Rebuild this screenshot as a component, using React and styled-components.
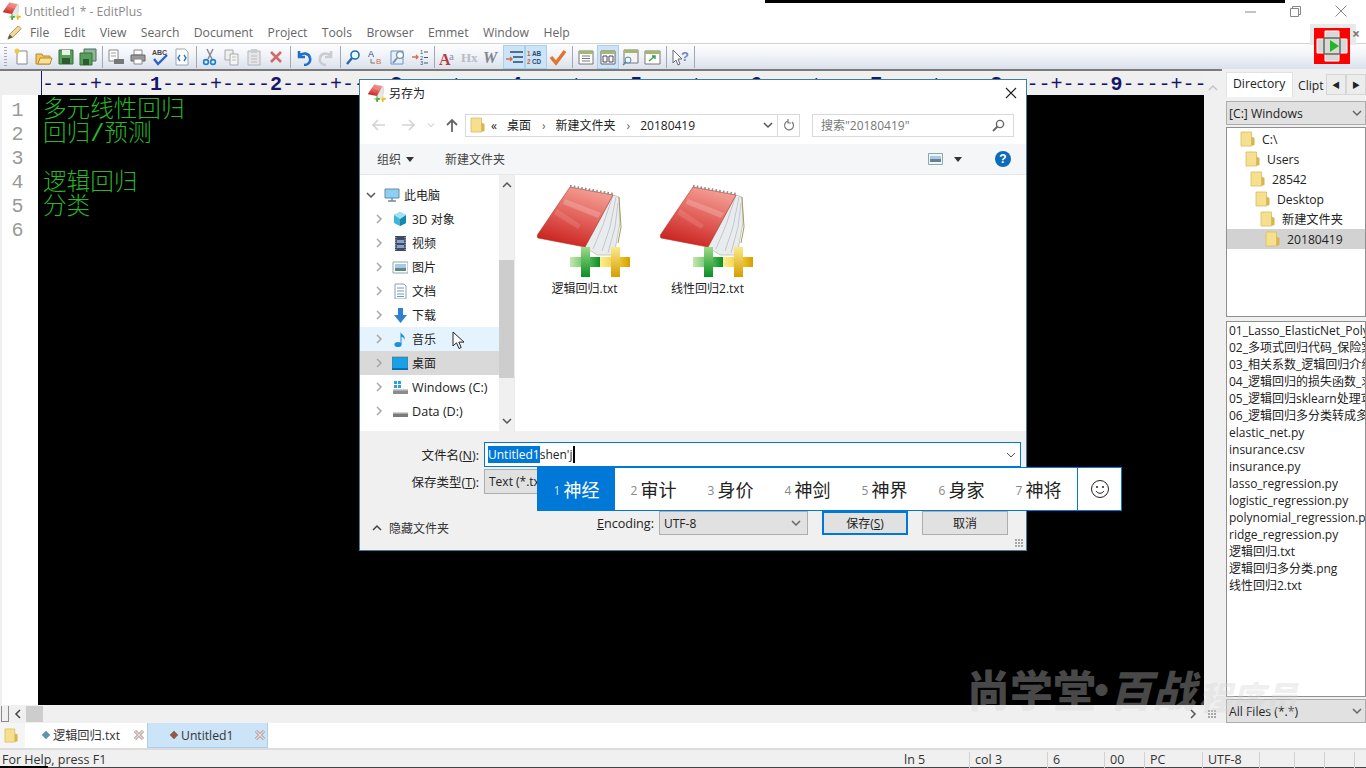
import { Fragment, useId } from "react";
import styled, { createGlobalStyle } from "styled-components";

const UI = `"Open Sans", "Noto Sans CJK SC", sans-serif`;

const Global = createGlobalStyle`
  html, body { margin: 0; padding: 0; background: #f0f0f0; }
  * { box-sizing: border-box; }
`;

const Shell = styled.div`
  position: relative;
  width: 1366px;
  height: 768px;
  overflow: hidden;
  display: flex;
  flex-direction: column;
  background: #f0f0f0;
  font-family: ${UI};
  font-size: 12.2px;
  color: #222;
`;

const Svg = styled.svg`
  flex: none;
`;

/* ---- app chrome ---- */
const TitleBar = styled.div`
  height: 22px;
  flex: none;
  display: flex;
  align-items: center;
  gap: 3px;
  padding-left: 3px;
  background: #fff;
  color: #8a8a8a;
`;
const WinButtons = styled.div`
  margin-left: auto;
  display: flex;
  height: 22px;
  align-items: center;
  padding-right: 3px;
`;
const WinButton = styled.div`
  width: 45px;
  display: flex;
  justify-content: center;
`;
const TopStrip = styled.div`
  position: absolute;
  left: 765px;
  top: 0;
  width: 520px;
  height: 3px;
  background: #000;
`;
const MenuBar = styled.div`
  height: 21px;
  flex: none;
  display: flex;
  align-items: center;
  padding-left: 6px;
  background: #fff;
  color: #666;
`;
const MenuItem = styled.span`
  margin-left: ${(p) => p.$gap}px;
`;
const ToolBar = styled.div`
  height: 26px;
  flex: none;
  display: flex;
  align-items: center;
  padding-left: 4px;
  border-top: 1px solid #d4d4d4;
  background: linear-gradient(#fdfdfe, #f0f3f8 45%, #dbe1ec);
`;
const Gripper = styled.div`
  width: 3px;
  height: 20px;
  margin-right: 4px;
  background: repeating-linear-gradient(#a9a9a9 0 1px, transparent 1px 3px);
`;
const ToolBtn = styled.div`
  width: 22px;
  height: 24px;
  flex: none;
  display: flex;
  align-items: center;
  justify-content: center;
  border: 1px solid ${(p) => (p.$active ? "#a9cfec" : "transparent")};
  background: ${(p) => (p.$active ? "#cde4f7" : "transparent")};
`;
const ToolSep = styled.div`
  width: 1px;
  height: 22px;
  flex: none;
  margin: 0 2.5px;
  background: #a4a8b0;
`;
const RunBadge = styled.div`
  position: absolute;
  left: 1310px;
  top: 24px;
  width: 46px;
  height: 21px;
  background: #e9e9e9;
`;
const RunIcon = styled.svg`
  position: absolute;
  left: 1314px;
  top: 28px;
`;
const RunClose = styled.span`
  position: absolute;
  left: 1352px;
  top: 24px;
  color: #777;
  font-size: 14px;
  font-weight: 700;
`;

/* ---- workspace ---- */
const Workspace = styled.div`
  flex: 1;
  min-height: 0;
  display: flex;
`;
const EditorPane = styled.div`
  width: 1222px;
  flex: none;
  display: flex;
  flex-direction: column;
  border-top: 2px solid #7b7b7b;
`;
const EditorRow = styled.div`
  flex: 1;
  min-height: 0;
  display: flex;
`;
const EditorCol = styled.div`
  width: 1204px;
  flex: none;
  display: flex;
  flex-direction: column;
`;
const RulerBar = styled.div`
  height: 24px;
  flex: none;
  padding-left: 42px;
  background: #efefef;
  overflow: hidden;
`;
const RulerText = styled.div`
  height: 24px;
  border-left: 1px solid #1a1a6e;
  margin-left: -1px;
  padding-top: 2px;
  font: 20px/24px "Liberation Mono", monospace;
  color: #16166a;
  white-space: pre;
`;
const RulerNum = styled.b`
  font-weight: 700;
`;
const TextArea = styled.div`
  flex: 1;
  display: flex;
  min-height: 0;
`;
const LineGutter = styled.div`
  width: 38px;
  flex: none;
  padding: 4px 5px 0 0;
  background: #fff;
  border-left: 2px solid #efefef;
  font: 20px/24px "Liberation Mono", monospace;
  color: #9a9a9a;
  text-align: center;
`;
const Code = styled.div`
  flex: 1;
  padding: 4px 0 0 5px;
  background: #000;
  color: #28b828;
  font: 300 23.6px/24.2px "Liberation Mono", "Noto Sans CJK SC", monospace;
  white-space: pre;
`;
const CodeLine = styled.div`
  height: 24.2px;
`;
const VScroll = styled.div`
  width: 18px;
  flex: none;
  display: flex;
  justify-content: center;
  padding-top: 12px;
  background: #f0f0f0;
`;
const HScroll = styled.div`
  height: 18px;
  flex: none;
  display: flex;
  align-items: center;
  background: #f0f0f0;
`;
const HStub = styled.div`
  width: 8px;
  height: 16px;
  margin-left: 1px;
  border: 1px solid #8c8c8c;
  border-top: none;
`;
const HArrow = styled.div`
  width: 17px;
  flex: none;
  display: flex;
  justify-content: center;
`;
const HThumb = styled.div`
  width: 17px;
  height: 16px;
  background: #cdcdcd;
`;
const HEnd = styled.div`
  margin-left: auto;
  display: flex;
  align-items: center;
  padding-right: 5px;
  gap: 10px;
`;
const Grip = styled.div`
  width: 9px;
  height: 9px;
  background: radial-gradient(circle at 1px 1px, #a8a8a8 1px, transparent 1.2px) 0 0 / 3px 3px;
`;

/* ---- side panel ---- */
const Side = styled.div`
  width: 140px;
  margin-left: 4px;
  flex: none;
  display: flex;
  flex-direction: column;
  padding-top: 3px;
`;
const SideTabs = styled.div`
  height: 25px;
  flex: none;
  display: flex;
  align-items: flex-start;
`;
const SideTab = styled.div`
  width: ${(p) => p.$w}px;
  height: 25px;
  flex: none;
  padding: ${(p) => (p.$on ? "2px 0 0 6px" : "4px 0 0 4px")};
  background: ${(p) => (p.$on ? "#fff" : "#f0f0f0")};
  border: 1px solid ${(p) => (p.$on ? "#e2e2e2" : "transparent")};
  border-bottom: none;
  overflow: hidden;
  white-space: nowrap;
`;
const ArrowBtn = styled.div`
  width: 20px;
  height: 21px;
  margin-top: 2px;
  flex: none;
  display: flex;
  align-items: center;
  justify-content: center;
  background: #ececec;
  border: 1px solid #d6d6d6;
  font-size: 8px;
  color: #222;
`;
const SideSelect = styled.div`
  height: 24px;
  flex: none;
  margin-top: ${(p) => p.$mt}px;
  display: flex;
  align-items: center;
  justify-content: space-between;
  padding: 0 3px 0 2px;
  background: #e1e1e1;
  border: 1px solid #adadad;
`;
const TreeBox = styled.div`
  height: 190px;
  flex: none;
  margin-top: 2px;
  padding-top: 1px;
  background: #fff;
  border: 1px solid #8f8f8f;
`;
const TreeRow = styled.div`
  height: 20px;
  display: flex;
  align-items: center;
  gap: 6px;
  padding-left: ${(p) => 13 + p.$level * 5}px;
  background: ${(p) => (p.$on ? "#d2d2d2" : "transparent")};
`;
const FileBox = styled.div`
  height: 376px;
  flex: none;
  margin-top: 4px;
  padding: 0 0 0 2px;
  background: #fff;
  border: 1px solid #8f8f8f;
  overflow: hidden;
  white-space: nowrap;
`;
const FileRow = styled.div`
  height: 17px;
  line-height: 17px;
  font-size: 12px;
`;

/* ---- tabs + status ---- */
const DocTabs = styled.div`
  height: 25px;
  flex: none;
  display: flex;
  background: #fff;
`;
const DocFolder = styled.div`
  width: 25px;
  flex: none;
  display: flex;
  align-items: center;
  padding-left: 4px;
  background: #f5f5f5;
`;
const DocTab = styled.div`
  width: ${(p) => p.$w}px;
  flex: none;
  display: flex;
  align-items: center;
  padding: 0 1px 0 ${(p) => p.$pad}px;
  background: ${(p) => (p.$on ? "#cbe4f8" : "transparent")};
  border: 1px solid ${(p) => (p.$on ? "#a9cfec" : "transparent")};
  border-top: none;
  color: #333;
`;
const Diamond = styled.span`
  width: 6px;
  height: 6px;
  margin-right: 4px;
  transform: rotate(45deg);
  background: ${(p) => p.$c};
`;
const TabClose = styled.svg`
  margin-left: auto;
`;
const StatusBar = styled.div`
  height: 20px;
  flex: none;
  display: flex;
  align-items: flex-start;
  padding-top: 2px;
  border-top: 2px solid #dcdcdc;
  border-bottom: 1px solid #444;
  background: #f0f0f0;
  color: #333;
  font-size: 12.5px;
  line-height: 15px;
`;
const StatusCell = styled.div`
  width: ${(p) => p.$w}px;
  flex: none;
  height: 17px;
  padding-left: ${(p) => p.$pad ?? 5}px;
  border-right: 1px solid ${(p) => (p.$plain ? "transparent" : "#d2d2d2")};
  white-space: nowrap;
`;
const StatusNick = styled.div`
  position: absolute;
  left: 0;
  bottom: 0;
  width: 48px;
  height: 2px;
  background: #000;
`;

/* ---- watermark ---- */
const Watermark = styled.div`
  position: absolute;
  left: 967px;
  top: 662px;
  display: flex;
  color: rgba(211, 211, 211, 0.35);
  font: 900 43px/52px "Noto Sans CJK SC", sans-serif;
  white-space: nowrap;
  pointer-events: none;
`;
const WatermarkDot = styled.span`
  display: inline-block;
  width: 17px;
  margin-left: -16px;
`;
const WatermarkSlant = styled.span`
  display: inline-block;
  transform: skewX(-14deg);
  font-size: ${(p) => p.$size}px;
  margin-left: ${(p) => p.$ml}px;
  margin-top: ${(p) => p.$mt}px;
`;

/* ---- save dialog ---- */
const Dialog = styled.div`
  position: absolute;
  left: 359px;
  top: 79px;
  width: 668px;
  height: 472px;
  display: flex;
  flex-direction: column;
  background: #fff;
  border: 1px solid #3e7f99;
  font-size: 12px;
  color: #222;
`;
const DlgTitle = styled.div`
  height: 26px;
  flex: none;
  display: flex;
  align-items: center;
  padding: 0 9px 0 8px;
  gap: 3px;
`;
const DlgClose = styled.svg`
  margin-left: auto;
`;
const DlgNav = styled.div`
  height: 38px;
  flex: none;
  display: flex;
  align-items: center;
  padding-left: 4px;
`;
const NavBtn = styled.div`
  width: ${(p) => p.$w}px;
  flex: none;
  display: flex;
  justify-content: center;
`;
const Address = styled.div`
  width: 335px;
  height: 23px;
  margin-left: 1px;
  flex: none;
  display: flex;
  align-items: center;
  padding-left: 4px;
  border: 1px solid #d9d9d9;
`;
const Crumb = styled.span`
  margin-left: ${(p) => p.$ml}px;
  white-space: nowrap;
`;
const CrumbSep = styled.span`
  margin-left: ${(p) => p.$ml}px;
  color: #666;
`;
const AddressEnd = styled.div`
  margin-left: auto;
  height: 100%;
  display: flex;
  align-items: center;
`;
const Refresh = styled.div`
  width: 22px;
  height: 100%;
  margin-left: 4px;
  display: flex;
  align-items: center;
  justify-content: center;
  border-left: 1px solid #d9d9d9;
`;
const Search = styled.div`
  width: 202px;
  height: 23px;
  margin-left: 12px;
  flex: none;
  display: flex;
  align-items: center;
  justify-content: space-between;
  padding: 0 8px;
  border: 1px solid #d9d9d9;
  color: #777;
`;
const DlgTools = styled.div`
  height: 31px;
  flex: none;
  display: flex;
  align-items: center;
  padding: 0 15px 0 17px;
  background: #f5f6f7;
  border-bottom: 1px solid #e8e8e8;
  color: #444;
`;
const Caret = styled.span`
  width: 0;
  height: 0;
  margin-left: ${(p) => p.$ml}px;
  border: 4px solid transparent;
  border-top: 5px solid #333;
  border-bottom: none;
`;
const ToolRight = styled.div`
  margin-left: auto;
  display: flex;
  align-items: center;
`;
const ToolLabel = styled.span`
  margin-left: ${(p) => p.$ml || 0}px;
`;
const HelpDot = styled.div`
  width: 16px;
  height: 16px;
  margin-left: 33px;
  border-radius: 50%;
  background: #0e6bb8;
  color: #fff;
  font: 700 12px/16px "Liberation Sans", sans-serif;
  text-align: center;
`;
const DlgBody = styled.div`
  height: 256px;
  flex: none;
  display: flex;
`;
const DlgTree = styled.div`
  width: 139px;
  flex: none;
  padding-top: 8px;
`;
const DlgTreeRow = styled.div`
  height: 24px;
  display: flex;
  align-items: center;
  background: ${(p) => p.$bg || "transparent"};
`;
const Chevron = styled.span`
  width: ${(p) => (p.$root ? 24 : 32)}px;
  flex: none;
  display: flex;
  justify-content: flex-end;
  padding-right: 8px;
`;
const TreeLabel = styled.span`
  margin-left: 4px;
  font-size: ${(p) => (p.$latin ? "12.6px" : "12px")};
  white-space: nowrap;
`;
const DlgScroll = styled.div`
  width: 16px;
  flex: none;
  display: flex;
  flex-direction: column;
  align-items: center;
  justify-content: space-between;
  position: relative;
  background: #f0f0f0;
  border-right: 1px solid #eaeaea;
`;
const ScrollCap = styled.div`
  height: 20px;
  flex: none;
  display: flex;
  align-items: center;
`;
const DlgThumb = styled.div`
  position: absolute;
  left: 0;
  top: 85px;
  width: 100%;
  height: 118px;
  background: #cdcdcd;
`;
const FilePane = styled.div`
  flex: 1;
  display: flex;
  padding: 8px 0 0 22px;
  gap: 28px;
`;
const FileItem = styled.div`
  width: 95px;
  display: flex;
  flex-direction: column;
  align-items: center;
  white-space: nowrap;
`;
const DlgFooter = styled.div`
  flex: 1;
  position: relative;
  padding: 11px 5px 0 0;
  background: #f0f0f0;
`;
const FormRow = styled.div`
  display: flex;
  align-items: center;
  height: 25px;
  margin-bottom: 2px;
`;
const FormLabel = styled.span`
  width: 120px;
  flex: none;
  text-align: right;
  padding-right: 1px;
  font-size: 12.5px;
`;
const NameInput = styled.div`
  flex: 1;
  height: 25px;
  margin-left: 4px;
  display: flex;
  align-items: center;
  padding-left: 3px;
  background: #fff;
  border: 1px solid #0078d7;
`;
const Selected = styled.span`
  background: #0078d7;
  color: #fff;
`;
const TextCaret = styled.span`
  width: 2px;
  height: 17px;
  background: #000;
`;
const InputChevron = styled.svg`
  margin-left: auto;
  margin-right: 4px;
`;
const TypeSelect = styled.div`
  flex: 1;
  height: 25px;
  margin-left: 4px;
  padding: 3px 0 0 4px;
  background: #e1e1e1;
  border: 1px solid #adadad;
`;
const ActionRow = styled.div`
  display: flex;
  align-items: center;
  height: 24px;
  margin-top: 17px;
  padding: 0 13px 0 12px;
`;
const HideToggle = styled.div`
  display: flex;
  align-items: center;
  gap: 7px;
  margin-top: 9px;
  color: #333;
`;
const EncLabel = styled.span`
  margin-left: auto;
  font-size: 12.6px;
`;
const EncSelect = styled.div`
  width: 149px;
  height: 24px;
  margin-left: 5px;
  display: flex;
  align-items: center;
  justify-content: space-between;
  padding: 0 6px 0 4px;
  background: #e1e1e1;
  border: 1px solid #adadad;
`;
const DlgButton = styled.div`
  width: 86px;
  height: 24px;
  margin-left: 14px;
  display: flex;
  align-items: center;
  justify-content: center;
  background: #e1e1e1;
  border: ${(p) => (p.$primary ? "2px solid #0078d7" : "1px solid #adadad")};
`;
const DlgGrip = styled(Grip)`
  position: absolute;
  right: 2px;
  bottom: 2px;
`;
const PointerIcon = styled.svg`
  position: absolute;
  left: 452px;
  top: 331px;
`;

/* ---- IME candidates ---- */
const Ime = styled.div`
  position: absolute;
  left: 537px;
  top: 467px;
  width: 585px;
  height: 44px;
  display: flex;
  background: #fff;
  border: 1px solid #0078d7;
  font-family: "Noto Sans CJK SC", sans-serif;
  font-size: 18px;
  color: #222;
`;
const Candidate = styled.div`
  width: 77px;
  flex: none;
  display: flex;
  align-items: center;
  justify-content: center;
  gap: 3px;
  background: ${(p) => (p.$on ? "#0078d7" : "transparent")};
  color: ${(p) => (p.$on ? "#fff" : "#222")};
`;
const CandNum = styled.span`
  font: 12px "Open Sans", sans-serif;
  padding-top: 3px;
  color: ${(p) => (p.$on ? "#cfe6fa" : "#888")};
`;
const Smile = styled.div`
  margin-left: auto;
  width: 45px;
  display: flex;
  align-items: center;
  justify-content: center;
  border-left: 1px solid #0078d7;
`;

/* ---- drawings ---- */
const Folder = ({ s = 16 }) => (
  <Svg width={s} height={s} viewBox="0 0 16 16">
    <path d="M1 1h10.5v14H1z" fill="#f6e08f" stroke="#d9bd62" strokeWidth=".8" />
    <path d="M11.5 5.5l3 1.5v7l-3 1z" fill="#d8b64f" />
  </Svg>
);

const Notebook = ({ s = 96 }) => {
  const id = useId();
  return (
    <Svg width={s} height={s} viewBox="0 0 96 96">
      <defs>
        <linearGradient id={id + "r"} x1="0.7" y1="0" x2="0.3" y2="1">
          <stop offset="0" stopColor="#f4a398" />
          <stop offset="0.5" stopColor="#e2605a" />
          <stop offset="1" stopColor="#c91f1c" />
        </linearGradient>
        <linearGradient id={id + "g"} x1="0" y1="0" x2="1" y2="0">
          <stop offset="0" stopColor="#c4e8ae" />
          <stop offset="0.55" stopColor="#5fc060" />
          <stop offset="1" stopColor="#0b8f22" />
        </linearGradient>
        <linearGradient id={id + "v"} x1="0" y1="0" x2="0" y2="1">
          <stop offset="0" stopColor="#9bdb8b" />
          <stop offset="1" stopColor="#0b8f22" />
        </linearGradient>
        <linearGradient id={id + "y"} x1="0" y1="0" x2="1" y2="0">
          <stop offset="0" stopColor="#fcec95" />
          <stop offset="0.55" stopColor="#f5cf35" />
          <stop offset="1" stopColor="#d79e00" />
        </linearGradient>
        <linearGradient id={id + "w"} x1="0" y1="0" x2="0" y2="1">
          <stop offset="0" stopColor="#fbe98a" />
          <stop offset="1" stopColor="#d79e00" />
        </linearGradient>
      </defs>
      <path d="M76 12l6 2 1 26-6 32H60L48 64z" fill="#e9ecef" stroke="#b5b5a8" strokeWidth=".7" />
      <path d="M76 12l-10 30-10 24M79 14l-6 30-8 24M81 20l-3 24-7 26" stroke="#c3c7cc" fill="none" />
      <path d="M82 14l2 30-3 16" stroke="#a89a60" fill="none" />
      <path d="M33 4l43 8-28 52L1 55c-1-1-1-3 0-4z" fill={`url(#${id}r)`} stroke="#b5302a" strokeWidth=".6" />
      <path d="M28 16l36 14-3 5-35-14z" fill="#fff" opacity=".2" />
      <path d="M20 26l24 16-3 4-24-15z" fill="#fff" opacity=".12" />
      <path d="M33 3l43 8" stroke="#8d8d8d" strokeWidth="2.4" strokeDasharray="1.6 2.2" fill="none" />
      <path d="M33 74h30v10H33z" fill={`url(#${id}g)`} />
      <path d="M44 64h9v30h-9z" fill={`url(#${id}v)`} />
      <path d="M63 74h30v10H63z" fill={`url(#${id}y)`} />
      <path d="M74 64h9v30h-9z" fill={`url(#${id}w)`} />
    </Svg>
  );
};

const Ico = ({ children, s = 18, v = 18 }) => (
  <Svg width={s} height={s} viewBox={`0 0 ${v} ${v}`}>
    {children}
  </Svg>
);

const toolIcons = {
  neu: <><path d="M4 3h10v13H4z" fill="#fff" stroke="#888" /><circle cx="4" cy="3" r="2.5" fill="#f2c744" /></>,
  open: <><path d="M1 6h6l1 2h7v8H1z" fill="#f0c75e" stroke="#b68a2c" /><path d="M3 16l2-6h12l-2 6z" fill="#f9e19a" stroke="#b68a2c" /></>,
  save: <><path d="M2 2h14v14H2z" fill="#57a05a" stroke="#3c6d3e" /><path d="M5 2h8v5H5z" fill="#e8f0e8" /><path d="M5 10h8v6H5z" fill="#2e5a30" /></>,
  saveall: <><path d="M5 1h12v12H5z" fill="#8db98f" stroke="#567" /><path d="M1 5h12v12H1z" fill="#57a05a" stroke="#3c6d3e" /><path d="M4 11h6v6H4z" fill="#2e5a30" /></>,
  preview: <><path d="M2 2h9v11H2z" fill="#fff" stroke="#888" /><path d="M4 5h5M4 8h5" stroke="#999" /><path d="M7 11h10v5H7z" fill="#777" /></>,
  print: <><path d="M5 2h8v5H5z" fill="#fff" stroke="#888" /><path d="M2 7h14v6H2z" fill="#999" stroke="#666" /><path d="M5 11h8v5H5z" fill="#fff" stroke="#888" /></>,
  spell: <><text x="1" y="7" fontSize="7" fontWeight="700" fontFamily="Liberation Sans" fill="#444">ABC</text><path d="M3 11l4 5 9-9" stroke="#2f62c9" strokeWidth="2.4" fill="none" /></>,
  html: <><path d="M3 1h9l3 3v13H3z" fill="#fff" stroke="#9aa" /><path d="M7 7L5 10l2 3M11 7l2 3-2 3" stroke="#2f74c9" strokeWidth="1.4" fill="none" /></>,
  cut: <><path d="M12 1L7 11M6 1l5 10" stroke="#889" strokeWidth="1.5" /><circle cx="5" cy="14" r="2.4" fill="none" stroke="#1f7fd0" strokeWidth="1.6" /><circle cx="12" cy="14" r="2.4" fill="none" stroke="#1f7fd0" strokeWidth="1.6" /></>,
  copy: <><path d="M2 2h8v10H2z" fill="#eee" stroke="#aaa" /><path d="M7 6h8v11H7z" fill="#f4f4f4" stroke="#aaa" /><path d="M9 9h4M9 12h4" stroke="#bbb" /></>,
  paste: <><path d="M3 3h12v14H3z" fill="#e6e6e6" stroke="#b5b5b5" /><path d="M6 1h6v4H6z" fill="#ccc" /><path d="M6 8h6M6 11h6M6 14h6" stroke="#bbb" /></>,
  del: <path d="M4 4l10 10M14 4L4 14" stroke="#cf6b6b" strokeWidth="2.6" />,
  undo: <path d="M4 3v6h6M4 8c4-4 10-3 11 2 1 4-2 7-6 7" stroke="#1f70c8" strokeWidth="2.6" fill="none" />,
  redo: <path d="M14 3v6H8M14 8c-4-4-10-3-11 2-1 4 2 7 6 7" stroke="#c9ccd0" strokeWidth="2.6" fill="none" />,
  find: <><circle cx="10" cy="7" r="4" fill="#dff" stroke="#2b6aa8" strokeWidth="1.6" /><path d="M7 10l-5 6" stroke="#2b6aa8" strokeWidth="2.4" /></>,
  replace: <><text x="1" y="9" fontSize="9" fontFamily="Liberation Sans" fill="#2a4a90">A</text><text x="9" y="16" fontSize="8" fontFamily="Liberation Sans" fill="#d2704f">B</text><path d="M4 11v4h4" stroke="#777" fill="none" /></>,
  findfile: <><path d="M2 3h12v13H2z" fill="#e5eefa" stroke="#6b94c8" /><circle cx="11" cy="7" r="3.4" fill="#fff" stroke="#7a8fa8" strokeWidth="1.3" /><path d="M8 10l-4 5" stroke="#7a8fa8" strokeWidth="2" /></>,
  number: <><path d="M1 9h6M5 7l2 2-2 2" stroke="#d2704f" strokeWidth="1.3" fill="none" /><text x="9" y="6" fontSize="5.5" fill="#2a4a90" fontFamily="Liberation Sans">1</text><text x="9" y="11.5" fontSize="5.5" fill="#2a4a90" fontFamily="Liberation Sans">2</text><text x="9" y="17" fontSize="5.5" fill="#2a4a90" fontFamily="Liberation Sans">3</text><path d="M13 4h4M13 9.5h4M13 15h4" stroke="#555" /></>,
  font: <><text x="0" y="17" fontSize="16" fontWeight="700" fontFamily="Liberation Serif" fill="#b53a3a">A</text><text x="10" y="12" fontSize="11" fontFamily="Liberation Serif" fill="#8a8ab0">a</text></>,
  hx: <text x="0" y="14" fontSize="13" fontWeight="700" fontFamily="Liberation Serif" fill="#b9bcc4">Hx</text>,
  w: <text x="0" y="15" fontSize="16" fontWeight="700" fontStyle="italic" fontFamily="Liberation Serif" fill="#7f8590">W</text>,
  indent: <><path d="M5 4h13M8 9h10M8 14h10" stroke="#234a78" strokeWidth="1.5" /><path d="M1 11h6M5 9l2 2-2 2" stroke="#d2704f" strokeWidth="1.4" fill="none" /></>,
  wrap: <><text x="0" y="8" fontSize="6.4" fontFamily="Liberation Sans" fontWeight="700" fill="#c2603a">1</text><text x="0" y="16" fontSize="6.4" fontFamily="Liberation Sans" fontWeight="700" fill="#c2603a">2</text><text x="5" y="8" fontSize="6.4" fontFamily="Liberation Sans" fontWeight="700" fill="#234a78">AB</text><text x="5" y="16" fontSize="6.4" fontFamily="Liberation Sans" fontWeight="700" fill="#234a78">CD</text></>,
  check: <path d="M2 9l5 6L16 3" stroke="#e1742f" strokeWidth="3.4" fill="none" />,
  panel1: <><path d="M2 3h14v13H2z" fill="#fff" stroke="#777" /><path d="M2 3h14v3H2z" fill="#a3b86a" /><path d="M5 8h8M5 10.5h8M5 13h8" stroke="#778" /></>,
  panel2: <><path d="M2 3h14v13H2z" fill="#fff" stroke="#666" /><path d="M2 3h14v3H2z" fill="#a3b86a" /><path d="M4 8h4v6H4zM10 8h4v6h-4z" fill="none" stroke="#446" /></>,
  panel3: <><path d="M3 2h14v13H3z" fill="#f5f5f5" stroke="#777" /><path d="M3 2h14v3H3z" fill="#a3b86a" /><circle cx="7" cy="12" r="3" fill="#dff" stroke="#5b7fa8" /><path d="M5 14l-3 3" stroke="#5b7fa8" strokeWidth="1.6" /></>,
  panel4: <><path d="M2 3h15v13H2z" fill="#fff" stroke="#777" /><path d="M2 3h15v3H2z" fill="#a3b86a" /><path d="M6 13l6-5M9 8h3v3" stroke="#3a9a48" strokeWidth="1.4" fill="none" /></>,
  helpq: <><path d="M2 2v13l3-3 2 5 2-1-2-5h4z" fill="#fff" stroke="#667" /><text x="10" y="13" fontSize="13" fontWeight="700" fontFamily="Liberation Sans" fill="#6d86c0">?</text></>,
};

const toolbar = [
  ["neu", "open", "save", "saveall"],
  ["preview", "print", "spell", "html"],
  ["cut", "copy", "paste", "del"],
  ["undo", "redo"],
  ["find", "replace", "findfile", "number"],
  ["font", "hx", "w", "indent", "wrap", "check"],
  ["panel1", "panel2", "panel3", "panel4"],
  ["helpq"],
];
const activeTools = ["indent", "wrap", "panel2"];

const menus = ["File", "Edit", "View", "Search", "Document", "Project", "Tools", "Browser", "Emmet", "Window", "Help"];

const dirs = ["C:\\", "Users", "28542", "Desktop", "新建文件夹", "20180419"];

const files = [
  "01_Lasso_ElasticNet_Polynomial",
  "02_多项式回归代码_保险案例代码",
  "03_相关系数_逻辑回归介绍和原理",
  "04_逻辑回归的损失函数_求导推导",
  "05_逻辑回归sklearn处理鸢尾花",
  "06_逻辑回归多分类转成多个二分类",
  "elastic_net.py",
  "insurance.csv",
  "insurance.py",
  "lasso_regression.py",
  "logistic_regression.py",
  "polynomial_regression.py",
  "ridge_regression.py",
  "逻辑回归.txt",
  "逻辑回归多分类.png",
  "线性回归2.txt",
];

const Chev = ({ dir = "right", c = "#888", s = 10 }) => {
  const d = {
    right: "M3 1l4 4-4 4",
    left: "M7 1L3 5l4 4",
    down: "M1 3l4 4 4-4",
    up: "M1 7l4-4 4 4",
  }[dir];
  return (
    <Svg width={s} height={s} viewBox="0 0 10 10">
      <path d={d} fill="none" stroke={c} strokeWidth="1.5" />
    </Svg>
  );
};

const treeItems = [
  { label: "3D 对象", icon: <><path d="M8 1l6 3v8l-6 3-6-3V4z" fill="#3fb6d8" /><path d="M8 8l6-4v8l-6 3z" fill="#1788ae" /><path d="M2 4l6-3 6 3-6 4z" fill="#a5e2ef" /></> },
  { label: "视频", icon: <><path d="M3 1h11v15H3z" fill="#3e4a66" /><path d="M5 5h7v3H5zM5 10h7v3H5z" fill="#8aa3c8" /><path d="M3.8 2v13M13.2 2v13" stroke="#ccc" strokeDasharray="1.2 1.2" /></> },
  { label: "图片", icon: <><path d="M1 3h15v11H1z" fill="#fff" stroke="#8aa" /><path d="M3 5h11v4H3z" fill="#a9c8e8" /><path d="M3 9h11v3H3z" fill="#5d8a7a" /></> },
  { label: "文档", icon: <><path d="M3 1h9l2 2v13H3z" fill="#fff" stroke="#8a9fb5" /><path d="M5 5h7M5 8h7M5 11h7M5 13.5h7" stroke="#6a9ab8" /></> },
  { label: "下载", icon: <path d="M6 1h5v7h4l-6.5 8L2 8h4z" fill="#2f80d0" /> },
  { label: "音乐", bg: "#e5f3ff", icon: <><ellipse cx="6" cy="13.5" rx="3.6" ry="2.6" fill="#1f8fd8" /><path d="M8.5 13V1c1 3 5 3 4 8-1-3-2-3-3-3v7z" fill="#1f8fd8" /></> },
  { label: "桌面", bg: "#d9d9d9", icon: <><path d="M0 2h16v12H0z" fill="#18a0e8" stroke="#666" strokeWidth=".6" /><path d="M0 13h16v2H0z" fill="#0a6fb0" /></> },
  { label: "Windows (C:)", latin: true, icon: <><path d="M1 10h15v5H1z" fill="#8b8b8b" /><path d="M1 10h15v1.5H1z" fill="#ccc" /><path d="M2 2h3v3H2zM6 2h3v3H6zM2 6h3v3H2zM6 6h3v3H6z" fill="#2aa3d8" /></> },
  { label: "Data (D:)", latin: true, icon: <><path d="M1 9h15v5H1z" fill="#7a7a7a" /><path d="M1 9h15v1.5H1z" fill="#d5d5d5" /></> },
];

const candidates = ["神经", "审计", "身价", "神剑", "神界", "身家", "神将"];

const TabX = () => (
  <TabClose width="12" height="12" viewBox="0 0 12 12">
    <path d="M2 2l8 8M10 2l-8 8" stroke="#9c8a8a" strokeWidth="3" />
    <path d="M2 2l8 8M10 2l-8 8" stroke="#eed9d9" strokeWidth="1.6" />
  </TabClose>
);

export default function App() {
  return (
    <Shell>
      <Global />
      <TitleBar>
        <Notebook s={18} />
        Untitled1 * - EditPlus
        <WinButtons>
          <WinButton>
            <svg width="11" height="11" viewBox="0 0 11 11"><path d="M0 6h11" stroke="#888" /></svg>
          </WinButton>
          <WinButton>
            <svg width="11" height="11" viewBox="0 0 11 11"><path d="M.5 2.5h8v8h-8zM2.5 2V.5h8v8H9" fill="none" stroke="#888" /></svg>
          </WinButton>
          <WinButton>
            <svg width="12" height="12" viewBox="0 0 12 12"><path d="M.5.5l11 11M11.5.5l-11 11" stroke="#888" /></svg>
          </WinButton>
        </WinButtons>
      </TitleBar>
      <TopStrip />
      <MenuBar>
        <Ico s={17}>
          <path d="M2 16l2-5L13 2l3 3-9 9z" fill="#f3dc9a" stroke="#a68c4a" />
          <path d="M2 16l2-5 3 3z" fill="#555" />
        </Ico>
        {menus.map((m, i) => (
          <MenuItem key={m} $gap={i === 0 ? 7 : 14.4}>{m}</MenuItem>
        ))}
      </MenuBar>
      <ToolBar>
        <Gripper />
        {toolbar.map((group, i) => (
          <Fragment key={i}>
            {group.map((t) => (
              <ToolBtn key={t} $active={activeTools.includes(t)}>
                <Ico>{toolIcons[t]}</Ico>
              </ToolBtn>
            ))}
            <ToolSep />
          </Fragment>
        ))}
      </ToolBar>
      <RunBadge />
      <RunIcon width="36" height="36" viewBox="0 0 36 36">
        <path d="M0 0h36v36H0z" fill="#f00" />
        <path d="M11 3h14v8h8v14h-8v8H11v-8H3V11h8z" fill="#d8d8d8" stroke="#fff" />
        <path d="M10 10h16v16H10z" fill="#d8dcd0" stroke="#666" strokeWidth="1.5" />
        <path d="M16 12l9 6-9 6z" fill="#25b52c" />
      </RunIcon>
      <RunClose>×</RunClose>

      <Workspace>
        <EditorPane>
          <EditorRow>
            <EditorCol>
              <RulerBar>
                <RulerText>
                  {[1, 2, 3, 4, 5, 6, 7, 8, 9].map((n) => (
                    <Fragment key={n}>
                      ----+----<RulerNum>{n}</RulerNum>
                    </Fragment>
                  ))}
                  ----+--
                </RulerText>
              </RulerBar>
              <TextArea>
                <LineGutter>
                  {[1, 2, 3, 4, 5, 6].map((n) => (
                    <div key={n}>{n}</div>
                  ))}
                </LineGutter>
                <Code>
                  <CodeLine>多元线性回归</CodeLine>
                  <CodeLine>回归/预测</CodeLine>
                  <CodeLine />
                  <CodeLine>逻辑回归</CodeLine>
                  <CodeLine>分类</CodeLine>
                </Code>
              </TextArea>
            </EditorCol>
            <VScroll>
              <Chev dir="up" c="#c4c4c4" />
            </VScroll>
          </EditorRow>
          <HScroll>
            <HStub />
            <HArrow><Chev dir="left" c="#444" /></HArrow>
            <HThumb />
            <HEnd>
              <Chev dir="right" c="#555" />
              <Grip />
            </HEnd>
          </HScroll>
        </EditorPane>

        <Side>
          <SideTabs>
            <SideTab $w={67} $on>Directory</SideTab>
            <SideTab $w={33}>Clipt</SideTab>
            <ArrowBtn>◀</ArrowBtn>
            <ArrowBtn>▶</ArrowBtn>
          </SideTabs>
          <SideSelect $mt={4}>
            [C:] Windows
            <Chev dir="down" c="#666" />
          </SideSelect>
          <TreeBox>
            {dirs.map((d, i) => (
              <TreeRow key={d} $level={i} $on={i === 5}>
                <Folder />
                {d}
              </TreeRow>
            ))}
          </TreeBox>
          <FileBox>
            {files.map((f) => (
              <FileRow key={f}>{f}</FileRow>
            ))}
          </FileBox>
          <SideSelect $mt={2}>
            All Files (*.*)
            <Chev dir="down" c="#666" />
          </SideSelect>
        </Side>
      </Workspace>

      <DocTabs>
        <DocFolder><Folder s={15} /></DocFolder>
        <DocTab $w={122} $pad={17}>
          <Diamond $c="#5d93ad" />
          逻辑回归.txt
          <TabX />
        </DocTab>
        <DocTab $w={121} $on $pad={23}>
          <Diamond $c="#8f5a48" />
          Untitled1
          <TabX />
        </DocTab>
      </DocTabs>
      <StatusBar>
        <StatusCell $w={899} $pad={2} $plain>For Help, press F1</StatusCell>
        <StatusCell $w={71}>ln 5</StatusCell>
        <StatusCell $w={78}>col 3</StatusCell>
        <StatusCell $w={57}>6</StatusCell>
        <StatusCell $w={40}>00</StatusCell>
        <StatusCell $w={58}>PC</StatusCell>
        <StatusCell $w={57}>UTF-8</StatusCell>
        <StatusCell $w={35} />
        <StatusCell $w={30} />
        <StatusCell $w={30} />
      </StatusBar>
      <StatusNick />

      <Watermark>
        尚学堂
        <WatermarkDot>·</WatermarkDot>
        <WatermarkSlant $size={43} $ml={16} $mt={0}>百战</WatermarkSlant>
        <WatermarkSlant $size={33} $ml={3} $mt={8}>程序员</WatermarkSlant>
      </Watermark>

      <Dialog>
        <DlgTitle>
          <Notebook s={18} />
          另存为
          <DlgClose width="12" height="12" viewBox="0 0 12 12">
            <path d="M1 1l10 10M11 1L1 11" stroke="#222" strokeWidth="1.1" />
          </DlgClose>
        </DlgTitle>
        <DlgNav>
          <NavBtn $w={29}>
            <svg width="14" height="12" viewBox="0 0 14 12"><path d="M13 6H2M6 1L1 6l5 5" fill="none" stroke="#d4d4d4" strokeWidth="1.6" /></svg>
          </NavBtn>
          <NavBtn $w={29}>
            <svg width="14" height="12" viewBox="0 0 14 12"><path d="M1 6h11M8 1l5 5-5 5" fill="none" stroke="#d4d4d4" strokeWidth="1.6" /></svg>
          </NavBtn>
          <NavBtn $w={18}><Chev dir="down" c="#d8d8d8" s={8} /></NavBtn>
          <NavBtn $w={24}>
            <svg width="12" height="14" viewBox="0 0 12 14"><path d="M6 14V2M1 7l5-5 5 5" fill="none" stroke="#666" strokeWidth="1.8" /></svg>
          </NavBtn>
          <Address>
            <Folder />
            <Crumb $ml={5}>«</Crumb>
            <Crumb $ml={10}>桌面</Crumb>
            <CrumbSep $ml={11}>›</CrumbSep>
            <Crumb $ml={10}>新建文件夹</Crumb>
            <CrumbSep $ml={11}>›</CrumbSep>
            <Crumb $ml={10}>20180419</Crumb>
            <AddressEnd>
              <Chev dir="down" c="#555" />
              <Refresh>
                <svg width="12" height="13" viewBox="0 0 12 13"><path d="M9 3a4.5 4.5 0 1 1-4-1M5 0v4h3" fill="none" stroke="#777" strokeWidth="1.2" /></svg>
              </Refresh>
            </AddressEnd>
          </Address>
          <Search>
            搜索"20180419"
            <svg width="13" height="13" viewBox="0 0 13 13"><circle cx="8" cy="5" r="3.6" fill="none" stroke="#666" strokeWidth="1.4" /><path d="M5.5 7.5L1 12" stroke="#666" strokeWidth="1.8" /></svg>
          </Search>
        </DlgNav>
        <DlgTools>
          <ToolLabel>组织</ToolLabel>
          <Caret $ml={5} />
          <ToolLabel $ml={31}>新建文件夹</ToolLabel>
          <ToolRight>
            <svg width="15" height="12" viewBox="0 0 15 12"><path d="M.5.5h14v11H.5z" fill="#f2f5f8" stroke="#8aa" /><path d="M2 3h11v3H2z" fill="#a9c8e8" /><path d="M2 6h11v3H2z" fill="#66808c" /></svg>
            <Caret $ml={11} />
            <HelpDot>?</HelpDot>
          </ToolRight>
        </DlgTools>
        <DlgBody>
          <DlgTree>
            <DlgTreeRow>
              <Chevron $root><Chev dir="down" c="#555" /></Chevron>
              <Ico s={16} v={16}>
                <path d="M1 2h14v9H1z" fill="#8ed0f3" stroke="#6a8aa0" />
                <path d="M4 14h8M8 11v3" stroke="#6a8aa0" strokeWidth="1.4" />
              </Ico>
              <TreeLabel>此电脑</TreeLabel>
            </DlgTreeRow>
            {treeItems.map((t) => (
              <DlgTreeRow key={t.label} $bg={t.bg}>
                <Chevron><Chev c="#a6a6a6" /></Chevron>
                <Ico s={16} v={16}>{t.icon}</Ico>
                <TreeLabel $latin={t.latin}>{t.label}</TreeLabel>
              </DlgTreeRow>
            ))}
          </DlgTree>
          <DlgScroll>
            <ScrollCap><Chev dir="up" c="#555" /></ScrollCap>
            <DlgThumb />
            <ScrollCap><Chev dir="down" c="#555" /></ScrollCap>
          </DlgScroll>
          <FilePane>
            <FileItem>
              <Notebook />
              逻辑回归.txt
            </FileItem>
            <FileItem>
              <Notebook />
              线性回归2.txt
            </FileItem>
          </FilePane>
        </DlgBody>
        <DlgFooter>
          <FormRow>
            <FormLabel>文件名(<u>N</u>):</FormLabel>
            <NameInput>
              <Selected>Untitled1</Selected>shen'j<TextCaret />
              <InputChevron width="10" height="10" viewBox="0 0 10 10">
                <path d="M1 3l4 4 4-4" fill="none" stroke="#555" />
              </InputChevron>
            </NameInput>
          </FormRow>
          <FormRow>
            <FormLabel>保存类型(<u>T</u>):</FormLabel>
            <TypeSelect>Text (*.txt)</TypeSelect>
          </FormRow>
          <ActionRow>
            <HideToggle>
              <Chev dir="up" c="#444" />
              隐藏文件夹
            </HideToggle>
            <EncLabel><u>E</u>ncoding:</EncLabel>
            <EncSelect>
              UTF-8
              <Chev dir="down" c="#666" />
            </EncSelect>
            <DlgButton $primary>保存(<u>S</u>)</DlgButton>
            <DlgButton>取消</DlgButton>
          </ActionRow>
          <DlgGrip />
        </DlgFooter>
      </Dialog>

      <PointerIcon width="13" height="19" viewBox="0 0 13 19">
        <path d="M1 1v14l3.5-3.2L7 17.5l2.2-1-2.4-5.4H12z" fill="#fff" stroke="#222" />
      </PointerIcon>

      <Ime>
        {candidates.map((c, i) => (
          <Candidate key={c} $on={i === 0}>
            <CandNum $on={i === 0}>{i + 1}</CandNum>
            {c}
          </Candidate>
        ))}
        <Smile>
          <svg width="20" height="20" viewBox="0 0 20 20">
            <circle cx="10" cy="10" r="8.5" fill="none" stroke="#222" />
            <circle cx="7" cy="8" r="1" fill="#222" />
            <circle cx="13" cy="8" r="1" fill="#222" />
            <path d="M6 12c2 3 6 3 8 0" fill="none" stroke="#222" />
          </svg>
        </Smile>
      </Ime>
    </Shell>
  );
}
